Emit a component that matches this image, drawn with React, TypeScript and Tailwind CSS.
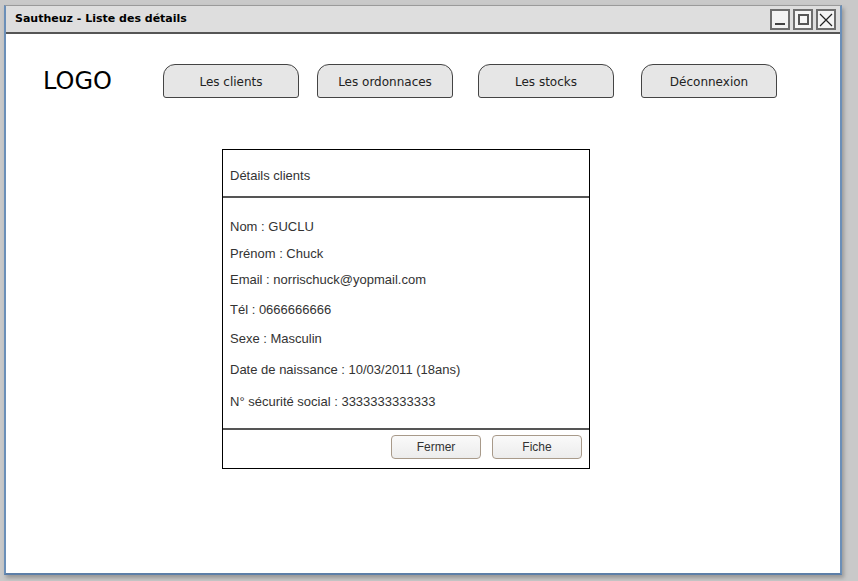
import React from "react";

const comic = { fontFamily: '"DejaVu Sans", "Liberation Sans", sans-serif' };
const arial = { fontFamily: '"Liberation Sans", Arial, sans-serif' };

function WinBtn({ children }: { children: React.ReactNode }) {
  return (
    <div className="w-[20px] h-[21px] border-2 border-[#6e6e6e] bg-[#f4f4f4] flex items-center justify-center">
      {children}
    </div>
  );
}

function NavBtn({ label }: { label: string }) {
  return (
    <div
      className="w-[136px] h-[34px] bg-[#e6e6e6] border border-[#444] rounded-t-[12px] rounded-b-[3px] flex items-center justify-center pt-[1px] text-[12px] text-[#222]"
      style={comic}
    >
      {label}
    </div>
  );
}

const rows: { text: string; mt: string }[] = [
  { text: "Nom : GUCLU", mt: "mt-[21px]" },
  { text: "Prénom : Chuck", mt: "mt-[11px]" },
  { text: "Email : norrischuck@yopmail.com", mt: "mt-[10px]" },
  { text: "Tél : 0666666666", mt: "mt-[14px]" },
  { text: "Sexe : Masculin", mt: "mt-[13px]" },
  { text: "Date de naissance : 10/03/2011 (18ans)", mt: "mt-[15px]" },
  { text: "N° sécurité social : 3333333333333", mt: "mt-[16px]" },
];

export default function App() {
  return (
    <div className="w-[858px] h-[581px] bg-[#c9c9c9] pl-[4px] pt-[5px] overflow-hidden">
      <div className="w-[838px] h-[570px] bg-white border-l-2 border-r-2 border-b-2 border-t border-l-[#6b8fb8] border-r-[#6b8fb8] border-b-[#5d7fa8] border-t-[#9a9a9a] shadow-[2px_3px_4px_rgba(0,0,0,0.25)] flex flex-col">
        {/* title bar */}
        <div className="h-[28px] bg-[#dedede] border-b-2 border-[#555] flex items-center justify-between pl-[9px] pr-[4px] shrink-0">
          <span className="text-[11px] font-bold text-black" style={comic}>
            Sautheuz - Liste des détails
          </span>
          <div className="flex gap-[3px] mt-[1px]">
            <WinBtn>
              <div className="w-[10px] h-[2px] bg-[#444] mt-[9px]" />
            </WinBtn>
            <WinBtn>
              <div className="w-[11px] h-[11px] border-2 border-[#555]" />
            </WinBtn>
            <WinBtn>
              <svg width="14" height="14" viewBox="0 0 14 14">
                <path d="M1 1 L13 13 M13 1 L1 13" stroke="#222" strokeWidth="1.2" />
              </svg>
            </WinBtn>
          </div>
        </div>

        {/* nav */}
        <div className="flex items-center mt-[29px] pl-[37px]">
          <div className="w-[120px] text-[24px] text-black" style={comic}>
            LOGO
          </div>
          <div className="flex">
            <NavBtn label="Les clients" />
            <div className="w-[18px]" />
            <NavBtn label="Les ordonnaces" />
            <div className="w-[25px]" />
            <NavBtn label="Les stocks" />
            <div className="w-[27px]" />
            <NavBtn label="Déconnexion" />
          </div>
        </div>

        {/* dialog */}
        <div
          className="ml-[216px] mt-[50px] w-[368px] h-[320px] border border-black flex flex-col text-[13px] text-[#333]"
          style={arial}
        >
          <div className="h-[48px] border-b-2 border-[#555] flex items-center pt-[5px] pl-[7px] shrink-0">
            Détails clients
          </div>
          <div className="flex-1 pl-[7px]">
            {rows.map((r) => (
              <div key={r.text} className={`${r.mt} leading-[16px]`}>
                {r.text}
              </div>
            ))}
          </div>
          <div className="h-[40px] border-t-2 border-[#555] flex items-start justify-end gap-[11px] pt-[5px] pr-[7px] shrink-0">
            <button className="w-[90px] h-[24px] rounded-[4px] border border-[#a89a8a] bg-gradient-to-b from-[#fafafa] to-[#ececec] text-[12px] text-[#333]">
              Fermer
            </button>
            <button className="w-[90px] h-[24px] rounded-[4px] border border-[#a89a8a] bg-gradient-to-b from-[#fafafa] to-[#ececec] text-[12px] text-[#333]">
              Fiche
            </button>
          </div>
        </div>
      </div>
    </div>
  );
}
